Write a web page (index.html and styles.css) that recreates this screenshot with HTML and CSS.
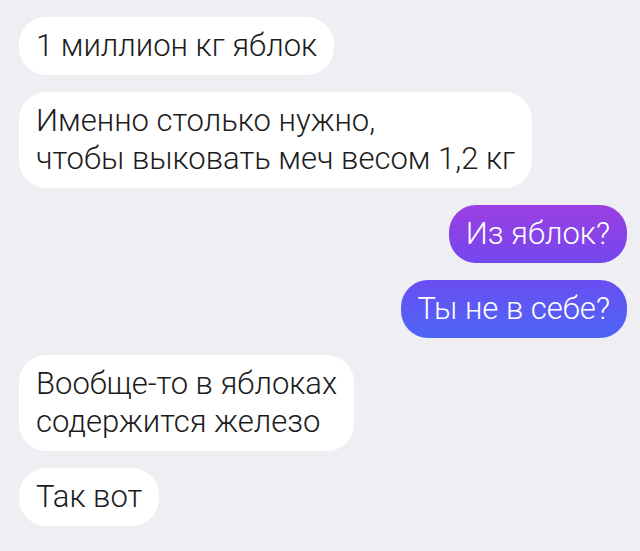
FILE: index.html
```html
<!DOCTYPE html>
<html lang="ru">
<head>
    <meta charset="UTF-8">
    <meta name="viewport" content="width=device-width, initial-scale=1.0">
    <title>Чат</title>
    <link rel="stylesheet" href="styles.css">
</head>
<body>
    <div class="chat">
        <div class="msg in">1 миллион кг яблок</div>
        <div class="msg in">Именно столько нужно,<br>чтобы выковать меч весом 1,2 кг</div>
        <div class="msg out first">Из яблок?</div>
        <div class="msg out second">Ты не в себе?</div>
        <div class="msg in">Вообще-то в яблоках<br>содержится железо</div>
        <div class="msg in">Так вот</div>
    </div>
</body>
</html>
```

FILE: styles.css
```css
body {
    margin: 0;
    padding: 0;
    background: #eeeef3;
    font-family: 'Roboto', 'Noto Sans', sans-serif;
    font-weight: 300;
}

.chat {
    display: flex;
    flex-direction: column;
    gap: 17px;
    padding: 17px 13px 17px 19px;
}

.msg {
    font-size: 31px;
    line-height: 38px;
    padding: 10px 17px;
    border-radius: 27px;
    max-width: 580px;
}

.msg.in {
    align-self: flex-start;
    background: #ffffff;
    color: #1c1c1e;
}

.msg.out {
    align-self: flex-end;
    color: #ffffff;
}

.msg.first {
    background: linear-gradient(to bottom, #9b3fe2, #7447ee);
}

.msg.second {
    background: linear-gradient(to bottom, #6a4ef2, #4c66f7);
}
```
